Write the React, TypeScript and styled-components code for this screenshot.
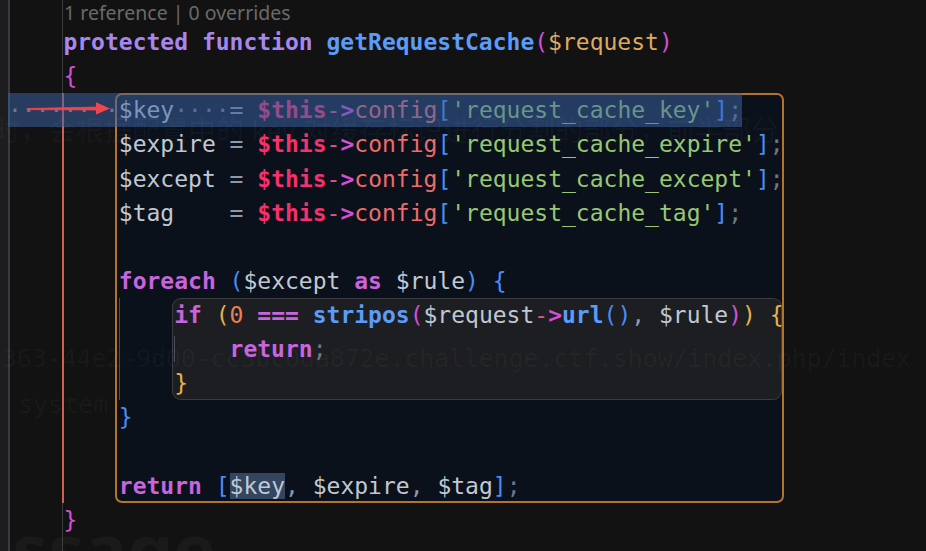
import React from 'react';
import styled, { createGlobalStyle } from 'styled-components';

const LH = 34.14;

const C = {
  kw: '#a985f0',
  kw2: '#c764de',
  fn: '#5a9cf8',
  mag: '#d44fd6',
  param: '#deaa5f',
  v: '#c0c8d4',
  op: '#9098a8',
  th: '#f5306c',
  dash: '#e0508c',
  cfg: '#ee6b6b',
  br: '#4a8cf5',
  str: '#98c872',
  semi: '#6f7787',
  yel: '#e6b04a',
  num: '#f08050',
  dot: '#6a7a96',
};

const Global = createGlobalStyle`
  html, body { margin: 0; padding: 0; background: #131313; overflow: hidden; }
  #root { width: 926px; height: 551px; }
`;

const Screen = styled.div`
  position: relative;
  display: flex;
  width: 926px;
  height: 551px;
  overflow: hidden;
  background: #131313;
`;

const Rail = styled.div`
  width: 8px;
  flex: none;
  background: #1d1d20;
`;

const Editor = styled.div`
  flex: 1;
  position: relative;
  box-shadow: inset 2px 0 0 #3a3a3f;
  background: linear-gradient(#3a3a3a, #3a3a3a) 53.5px 0 / 1px 100% no-repeat, #121212;
  font-family: "DejaVu Sans Mono", monospace;
  font-size: 23px;
  color: ${C.v};
`;

const CodeLens = styled.div`
  height: 25px;
  line-height: 25px;
  padding-left: 56px;
  font-family: "Noto Sans", sans-serif;
  font-size: 19.5px;
  color: #6a6a6a;
  white-space: pre;
`;

const Line = styled.div`
  height: ${LH}px;
  line-height: ${LH}px;
  white-space: pre;
`;

const Tok = styled.span<{ $c: string; $b?: boolean }>`
  color: ${(p) => p.$c};
  font-weight: ${(p) => (p.$b ? 700 : 400)};
`;

const Block = styled.div`
  position: relative;
  margin-left: 107px;
  width: 669px;
  box-sizing: border-box;
  padding: 0 2px 0 3.8px;
  background: #0b111b;
  border-radius: 7px;
  box-shadow: inset 0 0 0 2px #b5722d;
  &::before {
    content: '';
    position: absolute;
    left: -53.5px;
    top: 0;
    bottom: 0;
    width: 2px;
    background: #cf5f55;
  }
`;

const Band = styled.div`
  position: absolute;
  left: -107px;
  top: 0;
  width: 733.6px;
  height: 34px;
  line-height: 34px;
  background: rgba(60, 100, 165, 0.52);
  color: ${C.dot};
  white-space: pre;
  pointer-events: none;
`;

const Pointer = styled.svg`
  position: absolute;
  left: -95px;
  top: 4.7px;
  overflow: visible;
`;

const Nest = styled.div`
  box-shadow: inset 1px 0 0 #4d4d55;
  padding-left: 53.2px;
`;

const Inner = styled.div`
  background: #1d1e21;
  border-radius: 9px;
  box-shadow: inset 0 0 0 1px #3a3b3f;
  padding-left: 2.2px;
  overflow: hidden;
`;

const Guide = styled.span`
  box-shadow: inset 1px 0 0 #4c4a62;
`;

const Hl = styled.span`
  background: #34465f;
`;

const Ghost = styled.div<{ $x: number; $y: number; $size: number; $mono?: boolean; $bold?: boolean }>`
  position: absolute;
  left: ${(p) => p.$x}px;
  top: ${(p) => p.$y}px;
  font-family: ${(p) => (p.$mono ? '"DejaVu Sans Mono", monospace' : '"Noto Sans", "Noto Sans CJK SC", sans-serif')};
  font-size: ${(p) => p.$size}px;
  font-weight: ${(p) => (p.$bold ? 700 : 400)};
  line-height: 1;
  white-space: pre;
  color: rgba(255, 255, 255, 0.035);
  pointer-events: none;
`;

const Arrow = () => (
  <>
    <Tok $c={C.dash}>-</Tok>
    <Tok $c={C.mag} $b>&gt;</Tok>
  </>
);

const ThisConfig = () => (
  <>
    <Tok $c={C.th} $b>$this</Tok>
    <Arrow />
    <Tok $c={C.cfg}>config</Tok>
    <Tok $c={C.br}>[</Tok>
  </>
);

const Assign = ({ name, pad, key_ }: { name: string; pad: string; key_: string }) => (
  <Line>
    <Tok $c={C.v}>{name}</Tok>
    {pad}
    <Tok $c={C.op}>=</Tok> <ThisConfig />
    <Tok $c={C.str}>'{key_}'</Tok>
    <Tok $c={C.br}>]</Tok>
    <Tok $c={C.semi}>;</Tok>
  </Line>
);

export default function App() {
  return (
    <Screen>
      <Global />
      <Rail />
      <Editor>
        <CodeLens>1 reference | 0 overrides</CodeLens>
        <Line>
          {'    '}
          <Tok $c={C.kw} $b>protected</Tok> <Tok $c={C.kw} $b>function</Tok>{' '}
          <Tok $c={C.fn} $b>getRequestCache</Tok>
          <Tok $c={C.mag}>(</Tok>
          <Tok $c={C.param}>$request</Tok>
          <Tok $c={C.mag}>)</Tok>
        </Line>
        <Line>
          {'    '}
          <Tok $c={C.mag}>{'{'}</Tok>
        </Line>
        <Block>
          <Line>
            <Tok $c={C.v}>$key</Tok>
            <Tok $c={C.dot}>····</Tok>
            <Tok $c={C.op}>=</Tok> <ThisConfig />
            <Tok $c={C.str}>'request_cache_key'</Tok>
            <Tok $c={C.br}>]</Tok>
            <Tok $c={C.semi}>;</Tok>
          </Line>
          <Assign name="$expire" pad=" " key_="request_cache_expire" />
          <Assign name="$except" pad=" " key_="request_cache_except" />
          <Assign name="$tag" pad="    " key_="request_cache_tag" />
          <Line> </Line>
          <Line>
            <Tok $c={C.kw2} $b>foreach</Tok> <Tok $c={C.br}>(</Tok>
            <Tok $c={C.v}>$except</Tok> <Tok $c={C.kw2} $b>as</Tok> <Tok $c={C.v}>$rule</Tok>
            <Tok $c={C.br}>)</Tok> <Tok $c={C.br}>{'{'}</Tok>
          </Line>
          <Nest>
            <Inner>
              <Line>
                <Tok $c={C.kw2} $b>if</Tok> <Tok $c={C.yel}>(</Tok>
                <Tok $c={C.num}>0</Tok> <Tok $c={C.kw2} $b>===</Tok>{' '}
                <Tok $c={C.fn} $b>stripos</Tok>
                <Tok $c={C.mag}>(</Tok>
                <Tok $c={C.v}>$request</Tok>
                <Arrow />
                <Tok $c={C.fn} $b>url</Tok>
                <Tok $c={C.br}>()</Tok>
                <Tok $c={C.op}>,</Tok> <Tok $c={C.v}>$rule</Tok>
                <Tok $c={C.mag}>)</Tok>
                <Tok $c={C.yel}>)</Tok> <Tok $c={C.yel}>{'{'}</Tok>
              </Line>
              <Line>
                <Guide>{'    '}</Guide>
                <Tok $c={C.kw2} $b>return</Tok>
                <Tok $c={C.semi}>;</Tok>
              </Line>
              <Line>
                <Tok $c={C.yel}>{'}'}</Tok>
              </Line>
            </Inner>
          </Nest>
          <Line>
            <Tok $c={C.br}>{'}'}</Tok>
          </Line>
          <Line> </Line>
          <Line>
            <Tok $c={C.kw2} $b>return</Tok> <Tok $c={C.br}>[</Tok>
            <Hl>$key</Hl>
            <Tok $c={C.op}>,</Tok> <Tok $c={C.v}>$expire</Tok>
            <Tok $c={C.op}>,</Tok> <Tok $c={C.v}>$tag</Tok>
            <Tok $c={C.br}>]</Tok>
            <Tok $c={C.semi}>;</Tok>
          </Line>
          <Band>{'········'}</Band>
          <Pointer width="95" height="20" viewBox="0 0 95 20">
            <path d="M7 10.6 L80 9 L80 12 L7 11.6 Z" fill="#f04650" stroke="#f04650" strokeWidth="0.8" strokeLinejoin="round" />
            <polygon points="76,4.2 90,10.4 76,16.6" fill="#f04650" />
          </Pointer>
        </Block>
        <Line>
          {'    '}
          <Tok $c={C.mag}>{'}'}</Tok>
        </Line>
      </Editor>
      <Ghost $x={-8} $y={116} $size={28}>时，会根据配置中的 key 对缓存标识进行分割的部分，前半部分</Ghost>
      <Ghost $x={2} $y={347} $size={24.75} $mono>363-44e2-9d00-cc3bc0da872e.challenge.ctf.show/index.php/index</Ghost>
      <Ghost $x={18} $y={392} $size={25} $mono>system</Ghost>
      <Ghost $x={12} $y={512} $size={72} $bold>ssage</Ghost>
    </Screen>
  );
}
